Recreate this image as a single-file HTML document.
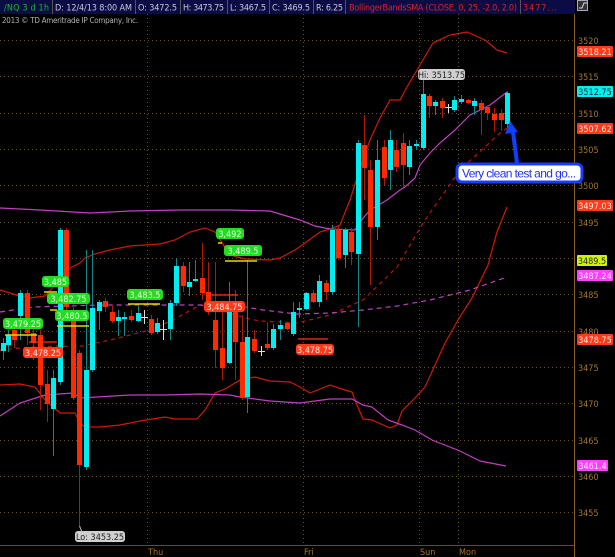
<!DOCTYPE html>
<html><head><meta charset="utf-8"><style>
html,body{margin:0;padding:0;background:#000;width:615px;height:557px;overflow:hidden}
svg{display:block}
text{font-family:"DejaVu Sans Condensed","Liberation Sans",sans-serif}
</style></head><body>
<svg width="615" height="557" viewBox="0 0 615 557" xmlns="http://www.w3.org/2000/svg">
<rect width="615" height="557" fill="#000"/>
<!-- header -->
<rect x="0" y="0" width="575" height="14" fill="#0c0c44"/>
<g stroke="#555" stroke-width="1">
<line x1="52.5" y1="0" x2="52.5" y2="14"/><line x1="135.5" y1="0" x2="135.5" y2="14"/>
<line x1="180.5" y1="0" x2="180.5" y2="14"/><line x1="227.5" y1="0" x2="227.5" y2="14"/>
<line x1="269.5" y1="0" x2="269.5" y2="14"/><line x1="313.5" y1="0" x2="313.5" y2="14"/>
<line x1="345.5" y1="0" x2="345.5" y2="14"/><line x1="520.5" y1="0" x2="520.5" y2="14"/>
</g>
<g font-size="9" fill="#c8c8d8">
<text x="4" y="10.5" fill="#10c020" textLength="45">/NQ 3 d 1h</text>
<text x="55" y="10.5" textLength="77">D: 12/4/13 8:00 AM</text>
<text x="138" y="10.5" textLength="39">O: 3472.5</text>
<text x="183" y="10.5" textLength="41">H: 3473.75</text>
<text x="230" y="10.5" textLength="36">L: 3467.5</text>
<text x="272" y="10.5" textLength="38">C: 3469.5</text>
<text x="316" y="10.5" textLength="27">R: 6.25</text>
<text x="349" y="10.5" fill="#e02020" textLength="168">BollingerBandsSMA (CLOSE, 0, 25, -2.0, 2.0)</text>
<text x="523" y="10.5" fill="#e02020" textLength="34">3477...</text>
</g>
<rect x="577.5" y="0.5" width="10" height="10" fill="#333" stroke="#aab" stroke-width="1"/>
<path d="M579 8 L582 8 L584 3 L587 3" stroke="#dde" fill="none" stroke-width="1"/>
<text x="2" y="23" font-size="8" fill="#b0b0b0" textLength="136">2013 © TD Ameritrade IP Company, Inc.</text>
<!-- grid -->
<g stroke="#6a5020" stroke-width="1" stroke-dasharray="1,3">
<line x1="0" y1="40.5" x2="574" y2="40.5"/><line x1="0" y1="76.5" x2="574" y2="76.5"/>
<line x1="0" y1="113.5" x2="574" y2="113.5"/><line x1="0" y1="149.5" x2="574" y2="149.5"/>
<line x1="0" y1="185.5" x2="574" y2="185.5"/><line x1="0" y1="222.5" x2="574" y2="222.5"/>
<line x1="0" y1="258.5" x2="574" y2="258.5"/><line x1="0" y1="294.5" x2="574" y2="294.5"/>
<line x1="0" y1="331.5" x2="574" y2="331.5"/><line x1="0" y1="367.5" x2="574" y2="367.5"/>
<line x1="0" y1="403.5" x2="574" y2="403.5"/><line x1="0" y1="440.5" x2="574" y2="440.5"/>
<line x1="0" y1="476.5" x2="574" y2="476.5"/><line x1="0" y1="512.5" x2="574" y2="512.5"/>
<line x1="147.5" y1="14" x2="147.5" y2="545"/><line x1="303.5" y1="14" x2="303.5" y2="545"/>
<line x1="419.5" y1="14" x2="419.5" y2="545"/><line x1="458.5" y1="14" x2="458.5" y2="545"/>
</g>
<line x1="574.5" y1="14" x2="574.5" y2="557" stroke="#8a6020"/>
<line x1="0" y1="545.5" x2="574" y2="545.5" stroke="#6a4a18"/>
<g font-size="9" fill="#a07830">
<text x="148" y="555">Thu</text><text x="304" y="555">Fri</text>
<text x="420" y="555">Sun</text><text x="459" y="555">Mon</text>
</g>
<g font-size="9" fill="#a07830" stroke="none">
<text x="578" y="44">3520</text><text x="578" y="80">3515</text><text x="578" y="117">3510</text>
<text x="578" y="153">3505</text><text x="578" y="189">3500</text><text x="578" y="226">3495</text>
<text x="578" y="262">3490</text><text x="578" y="298">3485</text><text x="578" y="335">3480</text>
<text x="578" y="371">3475</text><text x="578" y="407">3470</text><text x="578" y="444">3465</text>
<text x="578" y="480">3460</text><text x="578" y="516">3455</text>
</g>
<!-- bands -->
<g fill="none" stroke-width="1.2">
<polyline stroke="#d01808" points="0,290 20,296 30,298 45,296 55,285 62,275 70,268 80,263 85,258 95,254 110,250 130,246 160,244 175,240 190,232 205,228 215,232 230,255 245,259 270,260 280,258 295,250 305,243 320,232 330,229 340,225 350,200 360,168 370,140 380,118 390,100 400,100 407,87 420,65 433,43 450,35 467,32 485,40 497,50 507,53"/>
<polyline stroke="#d01808" points="0,385 20,384 35,387 45,400 60,413 75,413 80,423 85,427 100,427 120,425 140,421 165,417 175,419 197,419 205,410 215,393 225,389 240,380 255,377 270,381 290,382 300,387 310,393 330,385 345,390 352,392 357,405 363,419 372,420 390,428 397,425 402,411 415,398 425,387 435,365 445,343 458,320 472,298 488,265 497,232 507,207"/>
<polyline stroke="#c01010" stroke-dasharray="4,4" points="0,350 30,347 60,346 77,347 110,340 150,330 173,320 200,305 220,310 245,318 260,321 297,323 330,315 363,300 397,267 423,223 460,170 500,133 507,128"/>
<polyline stroke="#c040c0" stroke-dasharray="5,4" points="0,312 33,307 100,305 233,305 263,310 297,314 330,313 363,310 397,306 430,300 470,290 507,277"/>
<polyline stroke="#c040c0" points="0,208 40,210 90,213 130,211 180,210 230,210 270,211 300,220 315,226 330,229 355,230 360,222 370,210 387,200 400,190 405,187 415,178 420,165 430,153 440,143 455,130 470,115 490,105 507,92"/>
<polyline stroke="#c040c0" points="0,416 20,403 45,395 73,393 80,398 130,395 165,395 200,394 230,395 240,397 270,401 300,403 330,399 352,399 363,405 372,407 388,420 402,425 415,430 432,440 460,451 480,461 506,466"/>
</g>
<!-- candles -->
<g>
<g stroke="#118888" stroke-width="1">
<line x1="3.5" y1="338" x2="3.5" y2="360"/><line x1="8.5" y1="330" x2="8.5" y2="352"/><line x1="20.5" y1="290" x2="20.5" y2="340"/>
<line x1="53.5" y1="370" x2="53.5" y2="456"/><line x1="60.5" y1="228" x2="60.5" y2="385"/><line x1="86.5" y1="250" x2="86.5" y2="470"/>
<line x1="92.5" y1="250" x2="92.5" y2="372"/><line x1="99.5" y1="300" x2="99.5" y2="330"/><line x1="118.5" y1="310" x2="118.5" y2="336"/>
<line x1="124.5" y1="312" x2="124.5" y2="336"/><line x1="138.5" y1="306" x2="138.5" y2="322"/><line x1="157.5" y1="318" x2="157.5" y2="334"/>
<line x1="170.5" y1="300" x2="170.5" y2="340"/><line x1="176.5" y1="258" x2="176.5" y2="306"/><line x1="189.5" y1="262" x2="189.5" y2="296"/>
<line x1="195.5" y1="260" x2="195.5" y2="282"/><line x1="229.5" y1="282" x2="229.5" y2="364"/><line x1="247.5" y1="260" x2="247.5" y2="413"/>
<line x1="273.5" y1="324" x2="273.5" y2="350"/><line x1="280.5" y1="320" x2="280.5" y2="340"/><line x1="293.5" y1="302" x2="293.5" y2="336"/>
<line x1="299.5" y1="302" x2="299.5" y2="318"/><line x1="306.5" y1="292" x2="306.5" y2="310"/><line x1="319.5" y1="275" x2="319.5" y2="307"/>
<line x1="332.5" y1="225" x2="332.5" y2="295"/><line x1="345.5" y1="228" x2="345.5" y2="268"/><line x1="358.5" y1="140" x2="358.5" y2="327"/>
<line x1="377.5" y1="140" x2="377.5" y2="240"/><line x1="390.5" y1="130" x2="390.5" y2="190"/><line x1="409.5" y1="140" x2="409.5" y2="175"/>
<line x1="416.5" y1="140" x2="416.5" y2="150"/><line x1="423.5" y1="80" x2="423.5" y2="150"/><line x1="435.5" y1="100" x2="435.5" y2="115"/>
<line x1="454.5" y1="96" x2="454.5" y2="112"/><line x1="461.5" y1="95" x2="461.5" y2="104"/><line x1="474.5" y1="98" x2="474.5" y2="115"/>
<line x1="507.5" y1="91" x2="507.5" y2="128"/>
</g>
<g stroke="#b01808" stroke-width="1">
<line x1="14.5" y1="322" x2="14.5" y2="348"/><line x1="27.5" y1="290" x2="27.5" y2="345"/><line x1="33.5" y1="328" x2="33.5" y2="360"/>
<line x1="40.5" y1="330" x2="40.5" y2="410"/><line x1="47.5" y1="370" x2="47.5" y2="422"/><line x1="66.5" y1="228" x2="66.5" y2="310"/>
<line x1="73.5" y1="300" x2="73.5" y2="400"/><line x1="79.5" y1="350" x2="79.5" y2="526"/><line x1="105.5" y1="298" x2="105.5" y2="312"/>
<line x1="112.5" y1="305" x2="112.5" y2="323"/><line x1="131.5" y1="310" x2="131.5" y2="322"/><line x1="151.5" y1="315" x2="151.5" y2="335"/>
<line x1="183.5" y1="262" x2="183.5" y2="292"/><line x1="202.5" y1="243" x2="202.5" y2="300"/><line x1="208.5" y1="262" x2="208.5" y2="315"/>
<line x1="215.5" y1="262" x2="215.5" y2="368"/><line x1="222.5" y1="305" x2="222.5" y2="380"/><line x1="235.5" y1="290" x2="235.5" y2="380"/>
<line x1="242.5" y1="315" x2="242.5" y2="400"/><line x1="254.5" y1="330" x2="254.5" y2="353"/><line x1="267.5" y1="322" x2="267.5" y2="350"/>
<line x1="287.5" y1="322" x2="287.5" y2="330"/><line x1="313.5" y1="290" x2="313.5" y2="303"/><line x1="326.5" y1="280" x2="326.5" y2="300"/>
<line x1="338.5" y1="225" x2="338.5" y2="260"/><line x1="351.5" y1="228" x2="351.5" y2="265"/><line x1="364.5" y1="115" x2="364.5" y2="200"/>
<line x1="370.5" y1="160" x2="370.5" y2="285"/><line x1="384.5" y1="140" x2="384.5" y2="185"/><line x1="396.5" y1="140" x2="396.5" y2="172"/>
<line x1="403.5" y1="133" x2="403.5" y2="187"/><line x1="429.5" y1="94" x2="429.5" y2="118"/><line x1="442.5" y1="98" x2="442.5" y2="118"/>
<line x1="468.5" y1="99" x2="468.5" y2="104"/><line x1="481.5" y1="100" x2="481.5" y2="135"/><line x1="487.5" y1="105" x2="487.5" y2="120"/>
<line x1="494.5" y1="108" x2="494.5" y2="132"/><line x1="501.5" y1="109" x2="501.5" y2="131"/>
</g>
<g fill="#00eef0">
<rect x="1" y="343" width="5" height="8"/><rect x="6" y="335" width="5" height="10"/><rect x="18" y="293" width="5" height="23"/>
<rect x="51" y="378" width="5" height="31"/><rect x="58" y="230" width="5" height="152"/><rect x="84" y="370" width="5" height="97"/>
<rect x="90" y="308" width="5" height="62"/><rect x="97" y="302" width="5" height="9"/><rect x="116" y="317" width="5" height="4"/>
<rect x="122" y="317" width="5" height="2"/><rect x="136" y="313" width="5" height="8"/><rect x="155" y="323" width="5" height="9"/>
<rect x="168" y="303" width="5" height="26"/><rect x="174" y="266" width="5" height="37"/><rect x="187" y="282" width="5" height="5"/>
<rect x="193" y="279" width="5" height="2"/><rect x="227" y="308" width="5" height="55"/><rect x="245" y="337" width="5" height="60"/>
<rect x="271" y="329" width="5" height="19"/><rect x="278" y="325" width="5" height="4"/><rect x="291" y="312" width="5" height="22"/>
<rect x="297" y="308" width="5" height="2"/><rect x="304" y="293" width="5" height="16"/><rect x="317" y="281" width="5" height="21"/>
<rect x="330" y="230" width="5" height="62"/><rect x="343" y="230" width="5" height="25"/><rect x="356" y="143" width="5" height="111"/>
<rect x="375" y="160" width="5" height="67"/><rect x="388" y="140" width="5" height="30"/><rect x="407" y="146" width="5" height="21"/>
<rect x="414" y="144" width="5" height="2"/><rect x="421" y="94" width="5" height="54"/><rect x="433" y="102" width="5" height="4"/>
<rect x="452" y="100" width="5" height="10"/><rect x="459" y="99" width="5" height="3"/><rect x="472" y="101" width="5" height="5"/>
<rect x="505" y="93" width="5" height="31"/>
</g>
<g fill="#ff2a00">
<rect x="12" y="330" width="5" height="10"/><rect x="25" y="293" width="5" height="40"/><rect x="31" y="333" width="5" height="10"/>
<rect x="38" y="335" width="5" height="50"/><rect x="45" y="384" width="5" height="20"/><rect x="64" y="230" width="5" height="77"/>
<rect x="71" y="315" width="5" height="83"/><rect x="77" y="353" width="5" height="112"/><rect x="103" y="301" width="5" height="6"/>
<rect x="110" y="312" width="5" height="9"/><rect x="129" y="316" width="5" height="4"/><rect x="149" y="319" width="5" height="14"/>
<rect x="181" y="266" width="5" height="20"/><rect x="200" y="278" width="5" height="15"/><rect x="206" y="292" width="5" height="13"/>
<rect x="213" y="320" width="5" height="30"/><rect x="220" y="348" width="5" height="20"/><rect x="233" y="310" width="5" height="32"/>
<rect x="240" y="342" width="5" height="56"/><rect x="252" y="339" width="5" height="12"/><rect x="265" y="344" width="5" height="4"/>
<rect x="285" y="323" width="5" height="6"/><rect x="311" y="293" width="5" height="9"/><rect x="324" y="283" width="5" height="9"/>
<rect x="336" y="230" width="5" height="28"/><rect x="349" y="232" width="5" height="20"/><rect x="362" y="145" width="5" height="23"/>
<rect x="368" y="170" width="5" height="57"/><rect x="382" y="147" width="5" height="31"/><rect x="394" y="150" width="5" height="17"/>
<rect x="401" y="143" width="5" height="22"/><rect x="427" y="96" width="5" height="10"/><rect x="440" y="101" width="5" height="7"/>
<rect x="466" y="100" width="5" height="3"/><rect x="479" y="103" width="5" height="7"/><rect x="485" y="107" width="5" height="6"/>
<rect x="492" y="114" width="5" height="6"/><rect x="499" y="113" width="5" height="7"/>
</g>
<g stroke="#dddddd" stroke-width="1">
<line x1="144.5" y1="310" x2="144.5" y2="324"/><line x1="141" y1="317.5" x2="148" y2="317.5"/>
<line x1="163.5" y1="320" x2="163.5" y2="340"/><line x1="160" y1="329.5" x2="167" y2="329.5"/>
<line x1="261.5" y1="346" x2="261.5" y2="356"/><line x1="258" y1="351.5" x2="265" y2="351.5"/>
<line x1="448.5" y1="104" x2="448.5" y2="113"/><line x1="445" y1="107.5" x2="452" y2="107.5"/>
</g>
</g>
<!-- level lines -->
<g stroke="#d8e000" stroke-width="1.5">
<line x1="5" y1="335" x2="37" y2="335"/><line x1="44" y1="292" x2="57" y2="292"/><line x1="50" y1="310" x2="57" y2="310"/>
<line x1="57" y1="326" x2="89" y2="326"/><line x1="128" y1="304" x2="160" y2="304"/><line x1="218" y1="243" x2="222" y2="243"/>
<line x1="225" y1="261" x2="257" y2="261"/>
</g>
<g stroke="#ff3010" stroke-width="1.2">
<line x1="29" y1="342" x2="57" y2="342"/><line x1="207" y1="295" x2="238" y2="295"/><line x1="298" y1="339" x2="328" y2="339"/>
</g>
<!-- labels -->
<g font-size="9" text-anchor="middle">
<g fill="#22dd22"><rect x="42" y="276" width="27" height="11" rx="3"/><rect x="47" y="293" width="43" height="11" rx="3"/>
<rect x="55" y="310" width="34" height="11" rx="3"/><rect x="3" y="318" width="40" height="11" rx="3"/>
<rect x="127" y="289" width="36" height="11" rx="3"/><rect x="216" y="228" width="28" height="11" rx="3"/>
<rect x="224" y="245" width="38" height="11" rx="3"/></g>
<g fill="#eaffe0"><text x="55.5" y="285">3,485</text><text x="68.5" y="302">3,482.75</text><text x="72" y="319">3,480.5</text>
<text x="23" y="327">3,479.25</text><text x="145" y="298">3,483.5</text><text x="230" y="237">3,492</text><text x="243" y="254">3,489.5</text></g>
<g fill="#ff3a1a"><rect x="23" y="347" width="40" height="11" rx="3"/><rect x="204" y="301" width="41" height="11" rx="3"/><rect x="296" y="344" width="38" height="11" rx="3"/></g>
<g fill="#ffe8e0"><text x="43" y="356">3,478.25</text><text x="224.5" y="310">3,484.75</text><text x="315" y="353">3,478.75</text></g>
<rect x="418" y="69" width="47" height="11" rx="3" fill="#d0d0d0"/><text x="441.5" y="78" fill="#222">Hi: 3513.75</text>
<rect x="75" y="531" width="50" height="11" rx="3" fill="#d0d0d0"/><text x="100" y="540" fill="#222">Lo: 3453.25</text>
</g>
<line x1="79.5" y1="526" x2="82" y2="532" stroke="#bbb"/>
<!-- right labels -->
<g font-size="9" text-anchor="middle">
<rect x="577" y="46" width="36" height="11" rx="1" fill="#ff3a1a"/><text x="595" y="55" fill="#ffe8e0">3518.21</text>
<rect x="577" y="86" width="36" height="11" rx="1" fill="#00f0f0"/><text x="595" y="95" fill="#003030">3512.75</text>
<rect x="577" y="123" width="36" height="11" rx="1" fill="#ff3a1a"/><text x="595" y="132" fill="#ffe8e0">3507.62</text>
<rect x="577" y="200" width="36" height="11" rx="1" fill="#ff3a1a"/><text x="595" y="209" fill="#ffe8e0">3497.03</text>
<rect x="577" y="255" width="30" height="11" rx="1" fill="#d0f010"/><text x="592" y="264" fill="#203000">3489.5</text>
<rect x="577" y="270" width="36" height="11" rx="1" fill="#ff40ff"/><text x="595" y="279" fill="#ffe8ff">3487.24</text>
<rect x="577" y="334" width="36" height="11" rx="1" fill="#ff3a1a"/><text x="595" y="343" fill="#ffe8e0">3478.75</text>
<rect x="577" y="460" width="31" height="11" rx="1" fill="#ff40ff"/><text x="592.5" y="469" fill="#ffe8ff">3461.4</text>
</g>
<!-- callout -->
<path d="M517 163 L513 132" stroke="#1040ff" stroke-width="4"/>
<path d="M510 121 L505 134 L518 132 Z" fill="#1040ff"/>
<rect x="457" y="164" width="125" height="18" rx="5" fill="#fff" stroke="#1a3cff" stroke-width="3"/>
<text x="462" y="177.5" font-size="12" fill="#2030ff" style="font-family:'Liberation Sans',sans-serif" textLength="114">Very clean test and go...</text>
</svg>
</body></html>
